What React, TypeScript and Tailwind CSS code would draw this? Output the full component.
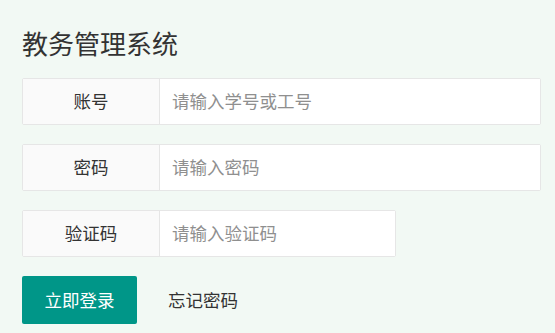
export default function App() {
  const rows = [
    { label: "账号", placeholder: "请输入学号或工号", wide: true },
    { label: "密码", placeholder: "请输入密码", wide: true, type: "password" },
    { label: "验证码", placeholder: "请输入验证码", wide: false },
  ];

  return (
    <div
      className="min-h-screen bg-[#f2f9f4] pl-[22px] pr-[15px] pt-[26px] text-[#333]"
      style={{ fontFamily: '"Noto Sans CJK SC", "Noto Sans", sans-serif' }}
    >
      <h1 className="text-[26px] leading-[34px] font-normal">教务管理系统</h1>

      <form className="mt-[18px] flex flex-col gap-[19px]">
        {rows.map((r) => (
          <div
            key={r.label}
            className={`flex h-[47px] rounded-[2px] border border-[#e6e6e6] bg-white ${
              r.wide ? "w-[519px]" : "w-[374px]"
            }`}
          >
            <label className="flex w-[137px] shrink-0 items-center justify-center border-r border-[#e6e6e6] bg-[#fafafa] text-[17.5px]">
              {r.label}
            </label>
            <input
              type={r.type ?? "text"}
              placeholder={r.placeholder}
              className="min-w-0 flex-1 bg-white px-[12px] text-[17.5px] outline-none placeholder:text-[#8f8f8f]"
            />
          </div>
        ))}

        <div className="flex items-center gap-[31px]">
          <button
            type="button"
            className="h-[48px] w-[115px] rounded-[2px] bg-[#009688] text-[17.5px] text-white"
          >
            立即登录
          </button>
          <a className="text-[17.5px] text-[#333]">忘记密码</a>
        </div>
      </form>
    </div>
  );
}
